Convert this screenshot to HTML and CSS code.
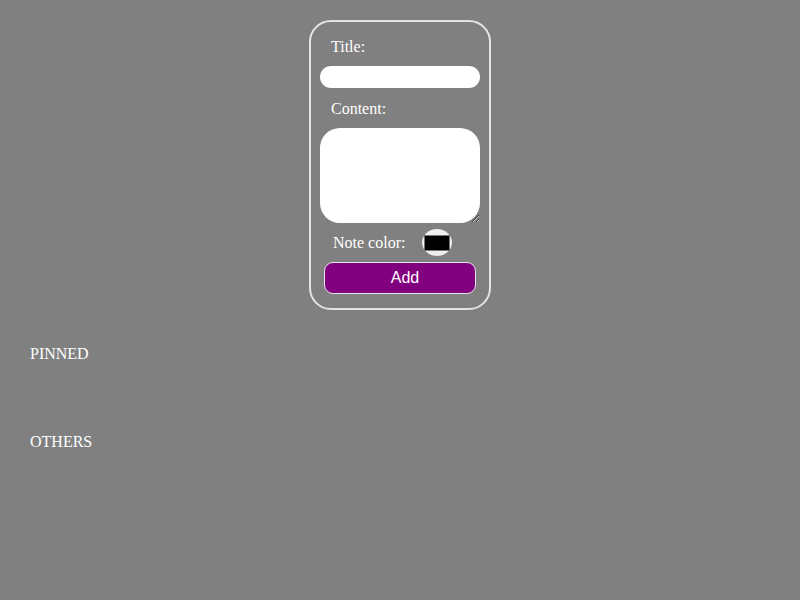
FILE: index.html
```html
<!DOCTYPE html>
<html>
<head>
<meta charset="utf-8">
<link rel="stylesheet" href="styles.css">
</head>
<body>
<form class="note-form">
  <label class="field-label" for="title">Title:</label>
  <input class="title-input" id="title" type="text">
  <label class="field-label" for="content">Content:</label>
  <textarea class="content-input" id="content"></textarea>
  <div class="color-row">
    <label class="color-label" for="color">Note color:</label>
    <input class="color-input" id="color" type="color" value="#000000">
  </div>
  <button class="add-btn" type="button">Add</button>
</form>
<section class="group pinned">
  <div class="group-title">PINNED</div>
</section>
<section class="group others">
  <div class="group-title">OTHERS</div>
</section>
</body>
</html>
```
FILE: styles.css
```css
html, body {
  margin: 0;
  padding: 0;
}
body {
  background: #808080;
  font-family: "Liberation Serif", "Times New Roman", serif;
  font-size: 16px;
  color: #ffffff;
  padding-top: 20px;
}
.note-form {
  box-sizing: border-box;
  width: 182px;
  height: 290px;
  margin: 0 auto;
  border: 2px solid #e4e4e4;
  border-radius: 22px;
  padding: 16px 9px 0 9px;
  display: flex;
  flex-direction: column;
}
.field-label {
  display: block;
  line-height: 18px;
  height: 18px;
  padding-left: 11px;
  margin-bottom: 10px;
}
.title-input {
  box-sizing: border-box;
  width: 160px;
  height: 22px;
  border: none;
  border-radius: 11px;
  background: #ffffff;
  margin: 0 0 12px 0;
  padding: 0 8px;
  outline: none;
}
.content-input {
  box-sizing: border-box;
  width: 160px;
  height: 95px;
  border: none;
  border-radius: 20px;
  background: #ffffff;
  margin: 0;
  padding: 8px;
  outline: none;
  resize: both;
}
.color-row {
  display: flex;
  align-items: center;
  height: 27px;
  margin-top: 6px;
  padding-left: 13px;
}
.color-label {
  line-height: 18px;
  width: 89px;
}
.color-input {
  box-sizing: border-box;
  width: 30px;
  height: 27px;
  margin: 0;
  padding: 0;
  border: none;
  border-radius: 50%;
  background: #efefef;
}
.color-input::-webkit-color-swatch-wrapper {
  padding: 6px 2px 5px 2px;
}
.color-input::-webkit-color-swatch {
  border: 1px solid #777777;
  border-radius: 0;
}
.add-btn {
  box-sizing: border-box;
  width: 152px;
  height: 32px;
  margin: 6px auto 0 auto;
  padding: 0 0 0 10px;
  background: #800080;
  color: #ffffff;
  border: 1px solid #e6e6e6;
  border-radius: 9px;
  font-family: "Liberation Sans", Arial, sans-serif;
  font-size: 16px;
}
.group {
  padding-left: 30px;
}
.group-title {
  line-height: 18px;
}
.pinned {
  margin-top: 35px;
  height: 88px;
}
```
